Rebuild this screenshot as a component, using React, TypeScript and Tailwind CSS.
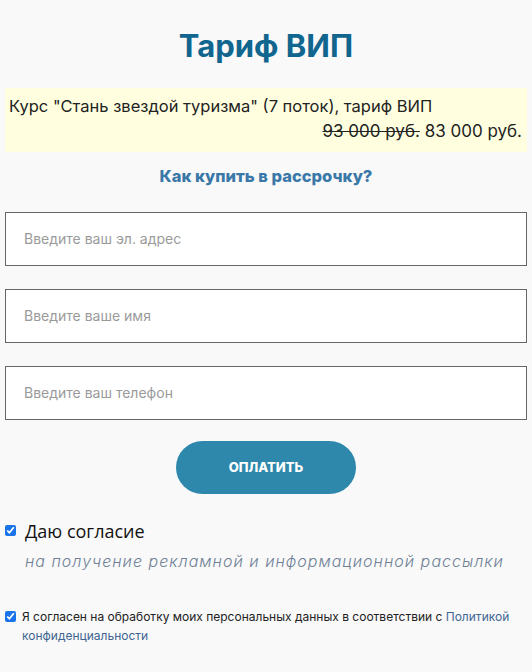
import { useState } from 'react'

const gilroy = { fontFamily: 'Inter, "Noto Sans", sans-serif' }

function Field({ placeholder }: { placeholder: string }) {
  return (
    <input
      type="text"
      placeholder={placeholder}
      className="block w-full h-[54px] border border-[#666] bg-white px-[18px] text-[14px] text-[#333] placeholder:text-[#9a9a9a] outline-none"
      style={gilroy}
    />
  )
}

export default function App() {
  const [ads, setAds] = useState(true)
  const [agree, setAgree] = useState(true)

  return (
    <div className="min-h-[672px] bg-[#f9f9f9] px-[5px] pt-[26px]" style={gilroy}>
      <h1 className="text-center text-[31px] font-bold leading-[40px] text-[#11668f]">
        Тариф ВИП
      </h1>

      <div className="mt-[22px] bg-[#ffffe0] px-[4px] pt-[6px] pb-[8px] text-[17px] leading-[25px] text-[#222]">
        <div className="text-[16.5px]">Курс "Стань звездой туризма" (7 поток), тариф ВИП</div>
        <div className="text-right pr-[1px]">
          <span className="line-through">93 000 руб.</span> 83 000 руб.
        </div>
      </div>

      <p className="mt-[12px] text-center text-[16.5px] font-extrabold text-[#3a78a8]">
        Как купить в рассрочку?
      </p>

      <div className="mt-[23px] flex flex-col gap-[23px]">
        <Field placeholder="Введите ваш эл. адрес" />
        <Field placeholder="Введите ваше имя" />
        <Field placeholder="Введите ваш телефон" />
      </div>

      <div className="mt-[21px] flex justify-center">
        <button className="h-[53px] w-[180px] rounded-full bg-[#2e88ab] text-[13px] font-extrabold text-white">
          ОПЛАТИТЬ
        </button>
      </div>

      <label className="mt-[25px] flex items-center gap-[9px]">
        <input
          type="checkbox"
          checked={ads}
          onChange={() => setAds(!ads)}
          className="m-0 h-[11px] w-[11px] accent-[#1a73e8]"
        />
        <span className="text-[18px] leading-[24px] text-[#111]" style={{ fontFamily: '"Open Sans", sans-serif' }}>
          Даю согласие
        </span>
      </label>
      <p className="mt-[6px] pl-[20px] whitespace-nowrap text-[16px] italic font-light tracking-[0.063em] text-[#6f8196]">
        на получение рекламной и информационной рассылки
      </p>

      <div className="mt-[34px] flex items-start gap-[6px] pr-[10px] text-[12px] leading-[19px] text-[#222]">
        <input
          type="checkbox"
          checked={agree}
          onChange={() => setAgree(!agree)}
          className="m-0 mt-[4px] h-[11px] w-[11px] shrink-0 accent-[#1a73e8]"
        />
        <p>
          Я согласен на обработку моих персональных данных в соответствии с{' '}
          <a className="text-[#3e6591]">Политикой конфиденциальности</a>
        </p>
      </div>
    </div>
  )
}
